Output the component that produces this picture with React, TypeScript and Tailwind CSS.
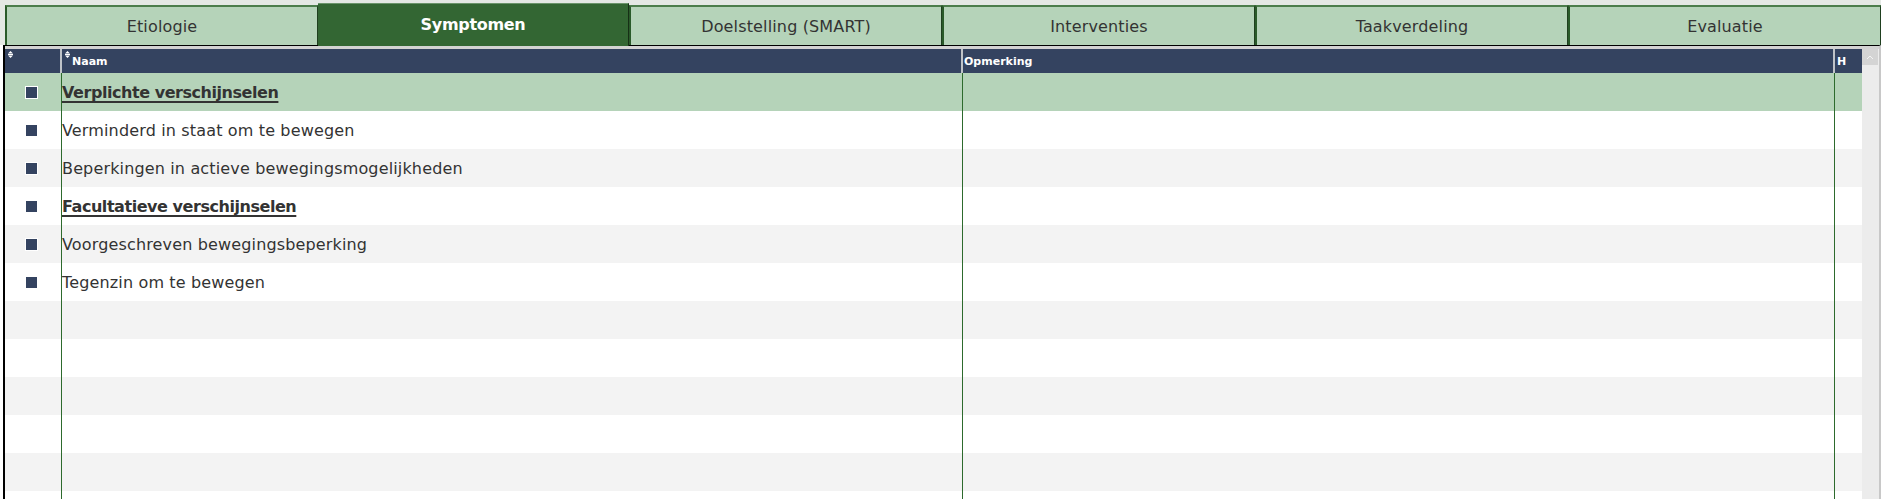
import React from 'react';

const tabs = ['Etiologie', 'Symptomen', 'Doelstelling (SMART)', 'Interventies', 'Taakverdeling', 'Evaluatie'];
const actief = 'Symptomen';

interface Rij {
   naam: string;
   groep?: boolean;
}

const rijen: Rij[] = [
   { naam: 'Verplichte verschijnselen', groep: true },
   { naam: 'Verminderd in staat om te bewegen' },
   { naam: 'Beperkingen in actieve bewegingsmogelijkheden' },
   { naam: 'Facultatieve verschijnselen', groep: true },
   { naam: 'Voorgeschreven bewegingsbeperking' },
   { naam: 'Tegenzin om te bewegen' },
   { naam: '' },
   { naam: '' },
   { naam: '' },
   { naam: '' },
   { naam: '' },
   { naam: '' },
];

function SortIcoon() {
   return (
      <svg width="5" height="7" viewBox="0 0 5 7" className="absolute left-[3px] top-[2px]">
         <polygon points="0,2.5 2.5,0 5,2.5" fill="#fff" />
         <rect x="0" y="3" width="5" height="1" fill="#fff" />
         <polygon points="0,4.5 5,4.5 2.5,7" fill="#fff" />
      </svg>
   );
}

export default function App() {
   return (
      <div className="w-[1881px] h-[499px] overflow-hidden bg-white font-['DejaVu_Sans',Verdana,sans-serif] text-[#333]">
         {/* tabbladen */}
         <div className="flex items-end h-[45px] pl-[5px] bg-[#e4e8e4]">
            {tabs.map((tab) =>
               tab === actief ? (
                  <div
                     key={tab}
                     className="relative z-10 flex-1 h-[43px] -mb-[1px] flex items-center justify-center bg-[#336633] border-t border-t-[#6a946a] border-r border-r-[#163016] text-white font-bold text-[16px] tracking-[-0.3px]"
                  >
                     {tab}
                  </div>
               ) : (
                  <div
                     key={tab}
                     className="flex-1 h-[40px] flex items-center justify-center pt-[2px] bg-[#b5d3b9] border-t-2 border-t-[#4b7d4b] border-l-2 border-l-[#2a5a2a] border-r border-r-[#1f3f1f] text-[16px] tracking-[0.15px] text-[#333]"
                  >
                     {tab}
                  </div>
               )
            )}
         </div>

         {/* tabel */}
         <div className="ml-[3px] border-t border-t-black border-l-2 border-l-black border-r-2 border-r-[#c8c8c8]">
            <div className="h-[3px] bg-[#d3d3d3]" />
            <div className="flex">
               <div className="flex-1">
                  <div className="grid grid-cols-[57px_901px_872px_1fr] h-[24px] bg-[#344360] text-white font-bold text-[11px]">
                     <div className="relative border-r-2 border-r-[#bfc3c8]">
                        <SortIcoon />
                     </div>
                     <div className="relative flex items-center pl-[10px] pt-[2px] border-r-2 border-r-[#bfc3c8]">
                        <SortIcoon />
                        Naam
                     </div>
                     <div className="flex items-center pl-[1px] pt-[2px] border-r-2 border-r-[#bfc3c8]">Opmerking</div>
                     <div className="flex items-center pl-[2px] pt-[2px]">H</div>
                  </div>
                  {rijen.map((rij, i) => (
                     <div
                        key={i}
                        className={
                           'grid grid-cols-[57px_901px_872px_1fr] h-[38px] ' +
                           (i === 0 ? 'bg-[#b5d3b9]' : i % 2 === 0 ? 'bg-[#f3f3f3]' : 'bg-white')
                        }
                     >
                        <div className="flex items-center pl-[20px] border-r border-r-[#2d6a2d]">
                           {rij.naam && <div className="w-[13px] h-[13px] border border-white bg-[#344360]" />}
                        </div>
                        <div className="flex items-center pt-[1px] border-r border-r-[#2d6a2d] text-[16px]">
                           {rij.groep ? (
                              <span className="font-bold tracking-[-0.45px] underline decoration-[1.5px] underline-offset-[3px] [text-decoration-skip-ink:none]">
                                 {rij.naam}
                              </span>
                           ) : (
                              <span className="tracking-[0.15px]">{rij.naam}</span>
                           )}
                        </div>
                        <div className="border-r border-r-[#2d6a2d]" />
                        <div />
                     </div>
                  ))}
               </div>

               {/* schuifbalk */}
               <div className="w-[17px] bg-[#ececec]">
                  <div className="h-[16px] w-[16px] bg-[#d4d4d4] flex items-center justify-center">
                     <svg width="8" height="5" viewBox="0 0 8 5">
                        <polyline points="1,4 4,1 7,4" fill="none" stroke="#f4f4f4" strokeWidth="1" />
                     </svg>
                  </div>
               </div>
            </div>
         </div>
      </div>
   );
}
